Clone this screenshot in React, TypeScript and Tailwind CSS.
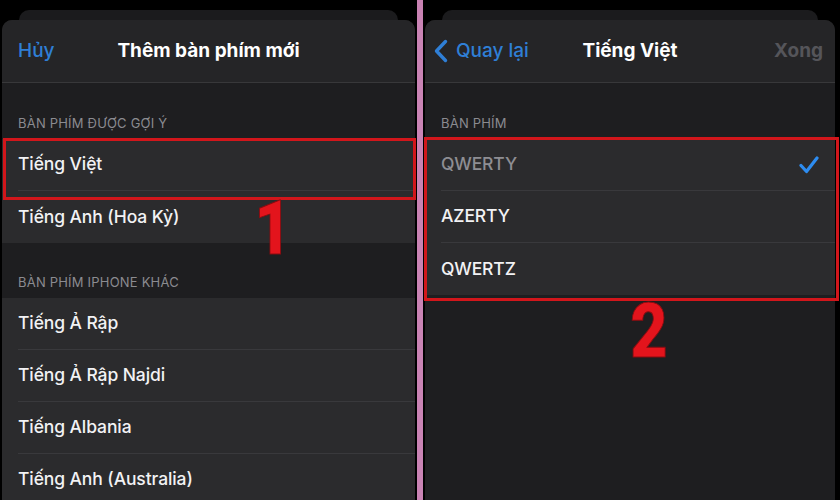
import { ReactNode } from "react";

const font = { fontFamily: "Inter, 'Noto Sans', sans-serif" };

function Row({ label, last, dim, checked }: { label: string; last?: boolean; dim?: boolean; checked?: boolean }) {
  return (
    <div className="pl-[16px] bg-[#2b2b2d]">
      <div
        className={`h-[52px] flex items-center justify-between pr-[16px] ${last ? "" : "border-b border-[#39393c]"}`}
      >
        <span className={`text-[17.5px] font-medium tracking-[-0.1px] ${dim ? "text-[#8e8e93]" : "text-[#f2f2f4]"}`}>
          {label}
        </span>
        {checked && (
          <svg width="20" height="18" viewBox="0 0 20 18" fill="none">
            <path d="M2 9.5 L7.5 15.5 L18 2" stroke="#2d8cf0" strokeWidth="3.2" strokeLinecap="round" strokeLinejoin="round" />
          </svg>
        )}
      </div>
    </div>
  );
}

function SectionTitle({ children, top }: { children: ReactNode; top: string }) {
  return (
    <div className={`${top} pb-[8px] px-[16px] text-[13px] leading-[16px] text-[#8b8b90] tracking-[0.2px]`}>
      {children}
    </div>
  );
}

function Sheet({ children, className }: { children: ReactNode; className: string }) {
  return (
    <div className={`flex flex-col h-full pt-[10px] ${className}`}>
      <div className="h-[10px] mx-[17px] rounded-t-[10px] bg-[#1b1b1d]" />
      <div className="flex-1 rounded-t-[10px] bg-[#1e1e20] overflow-hidden">{children}</div>
    </div>
  );
}

function BigNum({ n, className }: { n: string; className: string }) {
  return (
    <div
      className={`absolute text-[76px] leading-none font-black text-[#e3141c] scale-x-[0.85] [-webkit-text-stroke:1px_#8a0c10] ${className}`}
      style={{ fontFamily: "Roboto, 'Liberation Sans', sans-serif" }}
    >
      {n}
    </div>
  );
}

export default function App() {
  return (
    <div className="w-[840px] h-[500px] flex bg-black overflow-hidden" style={font}>
      {/* left */}
      <div className="relative w-[417px] h-full">
        <Sheet className="pl-[2px] pr-[2px]">
          <div className="h-[63px] bg-[#252527] border-b border-[#38383a] flex items-center relative px-[16px]">
            <span className="text-[19px] font-medium text-[#2f7fd6]">Hủy</span>
            <span className="absolute left-0 right-0 text-center text-[19px] font-bold text-white pointer-events-none">
              Thêm bàn phím mới
            </span>
          </div>
          <SectionTitle top="pt-[32px]">BÀN PHÍM ĐƯỢC GỢI Ý</SectionTitle>
          <Row label="Tiếng Việt" />
          <Row label="Tiếng Anh (Hoa Kỳ)" last />
          <SectionTitle top="pt-[31px]">BÀN PHÍM IPHONE KHÁC</SectionTitle>
          <Row label="Tiếng Ả Rập" />
          <Row label="Tiếng Ả Rập Najdi" />
          <Row label="Tiếng Albania" />
          <Row label="Tiếng Anh (Australia)" />
        </Sheet>
        <div className="absolute left-[3px] top-[138px] w-[413px] h-[62px] border-[3px] border-[#d2161b]" />
        <BigNum n="1" className="left-[251px] top-[190px]" />
      </div>

      <div className="w-[6px] h-full bg-[#c983b4]" />

      {/* right */}
      <div className="relative flex-1 h-full bg-[#14110e]">
        <Sheet className="pl-[2px] pr-[5px] bg-black">
          <div className="h-[63px] bg-[#252527] border-b border-[#38383a] flex items-center justify-between relative pl-[8px] pr-[12px]">
            <div className="flex items-center gap-[7px] text-[#2f7fd6]">
              <svg width="16" height="24" viewBox="0 0 16 24" fill="none">
                <path d="M12.5 2.5 L3.5 12 L12.5 21.5" stroke="#2f7fd6" strokeWidth="3.4" strokeLinecap="round" strokeLinejoin="round" />
              </svg>
              <span className="text-[19px] font-medium">Quay lại</span>
            </div>
            <span className="absolute left-0 right-0 text-center text-[19px] font-bold text-white pointer-events-none">
              Tiếng Việt
            </span>
            <span className="text-[19px] font-bold text-[#55555a]">Xong</span>
          </div>
          <SectionTitle top="pt-[32px]">BÀN PHÍM</SectionTitle>
          <Row label="QWERTY" dim checked />
          <Row label="AZERTY" />
          <Row label="QWERTZ" last />
        </Sheet>
        <div className="absolute left-[1px] top-[137px] w-[415px] h-[164px] border-[3px] border-[#d2161b]" />
        <BigNum n="2" className="left-[204px] top-[293px]" />
      </div>
    </div>
  );
}
